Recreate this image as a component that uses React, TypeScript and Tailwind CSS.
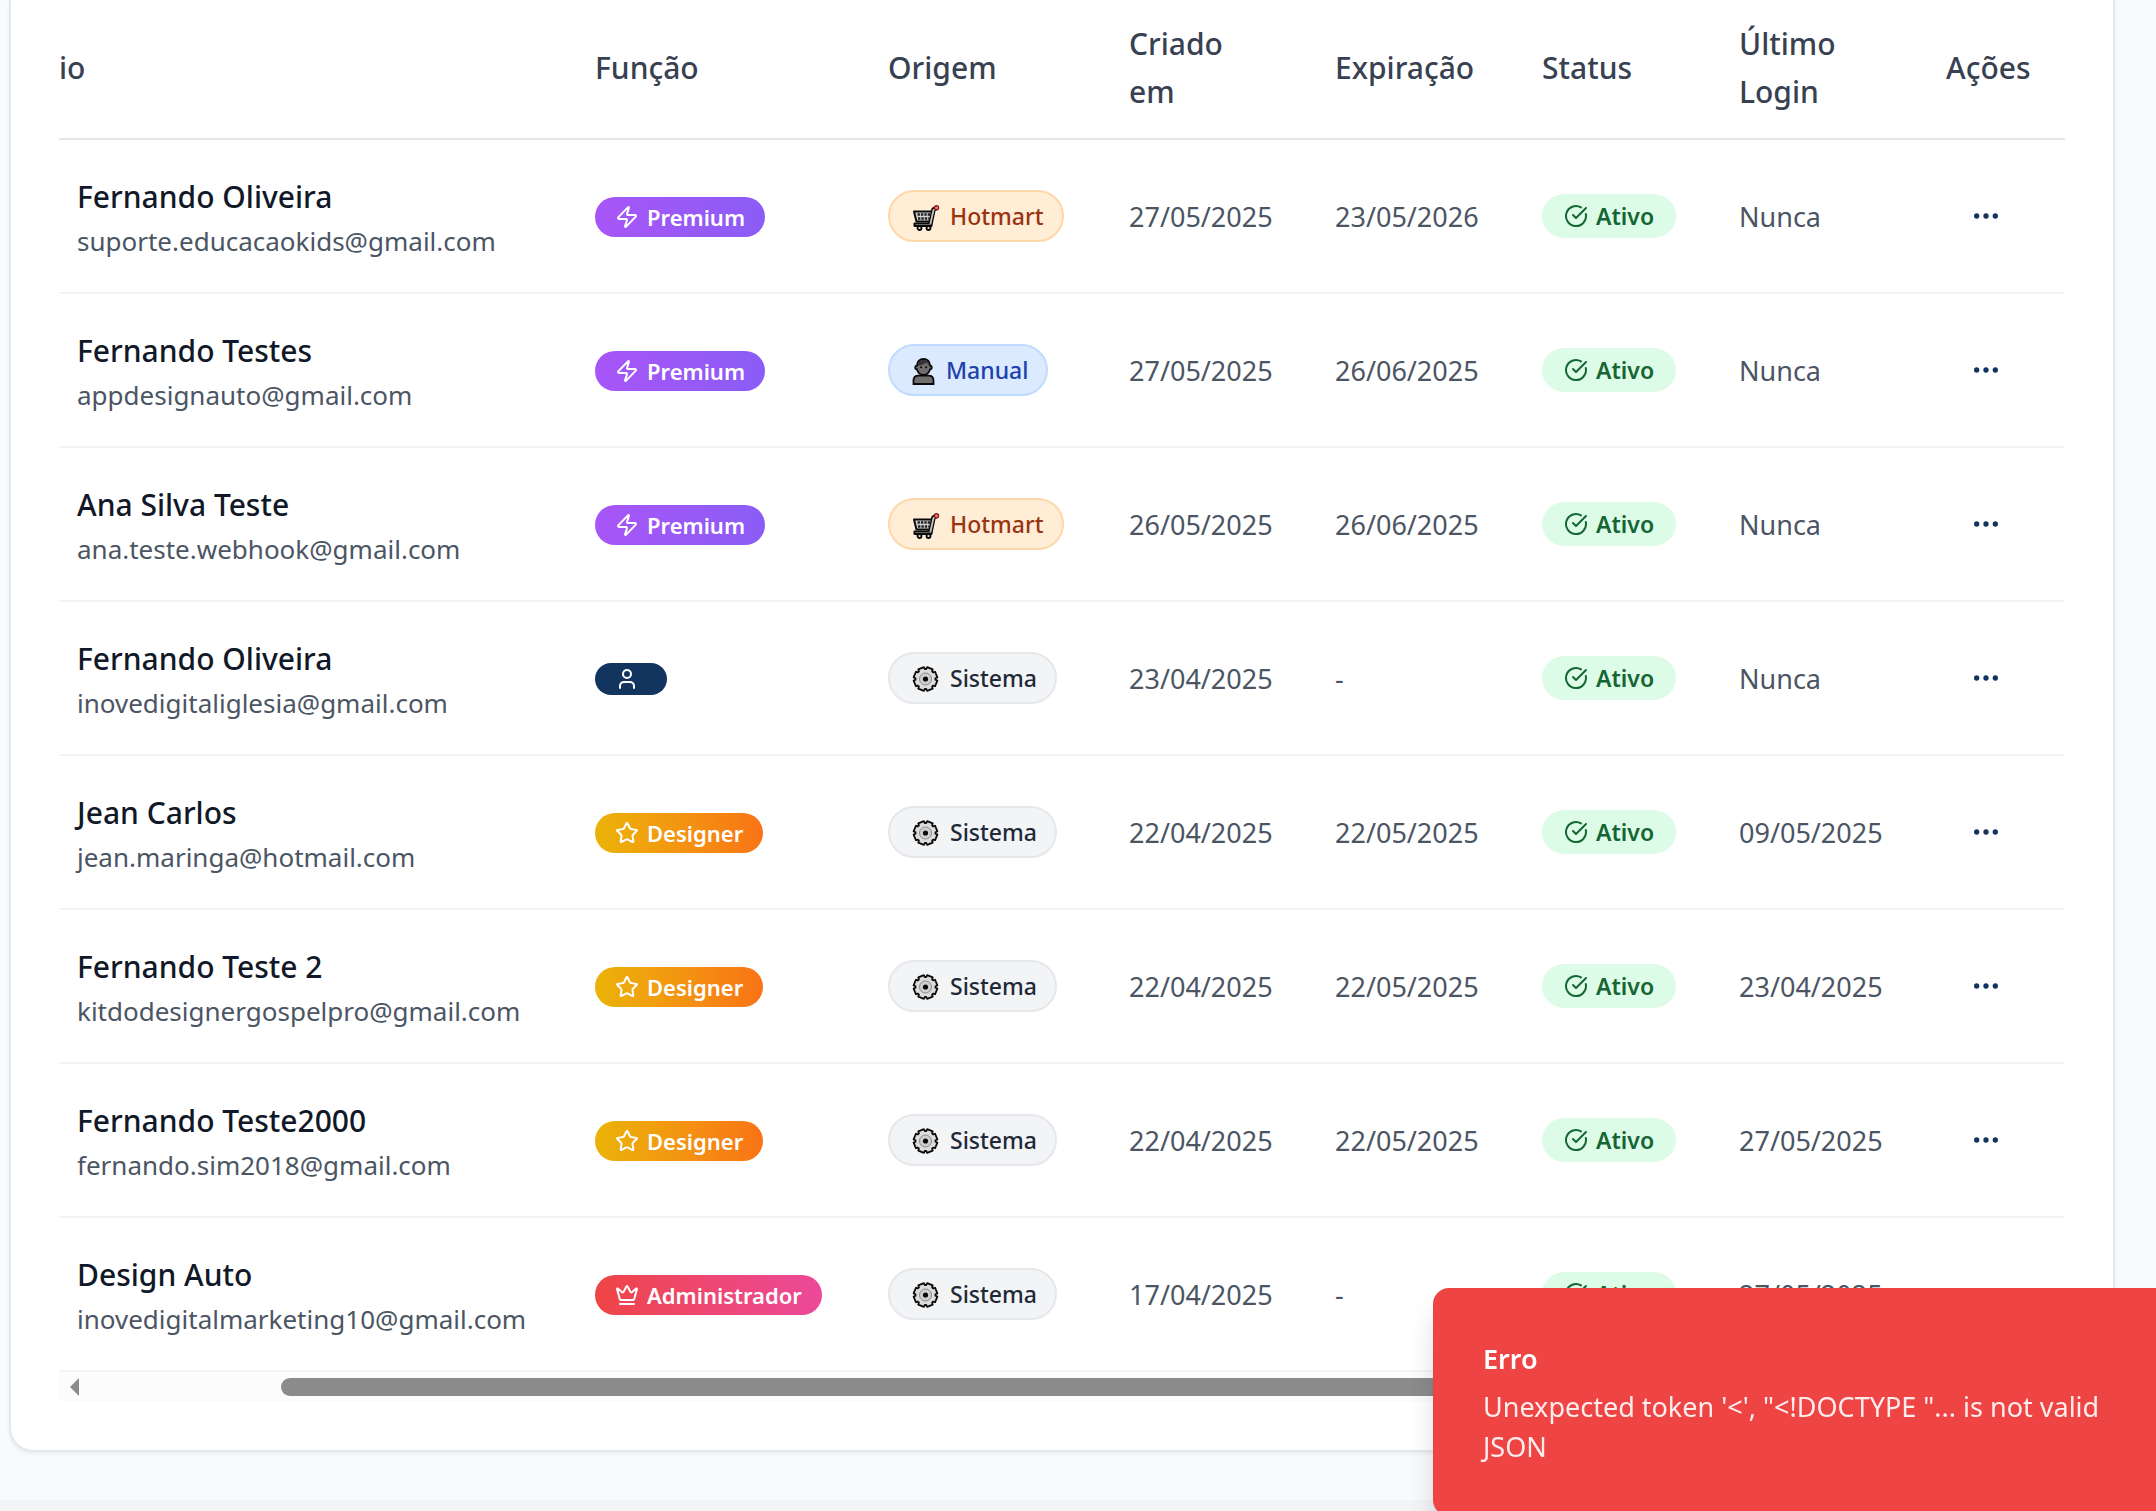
import { CircleCheckBig, Crown, Ellipsis, Star, User, Zap } from "lucide-react";

type Role = "premium" | "designer" | "admin" | "none";
type Origin = "hotmart" | "manual" | "sistema";

type Row = {
  name: string;
  email: string;
  role: Role;
  origin: Origin;
  created: string;
  expires: string;
  login: string;
};

const rows: Row[] = [
  { name: "Fernando Oliveira", email: "suporte.educacaokids@gmail.com", role: "premium", origin: "hotmart", created: "27/05/2025", expires: "23/05/2026", login: "Nunca" },
  { name: "Fernando Testes", email: "appdesignauto@gmail.com", role: "premium", origin: "manual", created: "27/05/2025", expires: "26/06/2025", login: "Nunca" },
  { name: "Ana Silva Teste", email: "ana.teste.webhook@gmail.com", role: "premium", origin: "hotmart", created: "26/05/2025", expires: "26/06/2025", login: "Nunca" },
  { name: "Fernando Oliveira", email: "inovedigitaliglesia@gmail.com", role: "none", origin: "sistema", created: "23/04/2025", expires: "-", login: "Nunca" },
  { name: "Jean Carlos", email: "jean.maringa@hotmail.com", role: "designer", origin: "sistema", created: "22/04/2025", expires: "22/05/2025", login: "09/05/2025" },
  { name: "Fernando Teste 2", email: "kitdodesignergospelpro@gmail.com", role: "designer", origin: "sistema", created: "22/04/2025", expires: "22/05/2025", login: "23/04/2025" },
  { name: "Fernando Teste2000", email: "fernando.sim2018@gmail.com", role: "designer", origin: "sistema", created: "22/04/2025", expires: "22/05/2025", login: "27/05/2025" },
  { name: "Design Auto", email: "inovedigitalmarketing10@gmail.com", role: "admin", origin: "sistema", created: "17/04/2025", expires: "-", login: "27/05/2025" },
];

const roles = {
  premium: { label: "Premium", Icon: Zap, style: "bg-linear-to-r from-[#a855f7] to-[#8b5cf6]" },
  designer: { label: "Designer", Icon: Star, style: "bg-linear-to-r from-[#eab308] to-[#f97316]" },
  admin: { label: "Administrador", Icon: Crown, style: "bg-linear-to-r from-[#ef4444] to-[#ec4899]" },
  none: { label: "", Icon: User, style: "bg-[#12355f]" },
};

function RoleBadge({ role }: { role: Role }) {
  const { label, Icon, style } = roles[role];
  return (
    <span className={`flex w-fit items-center gap-2 rounded-full px-5 py-1 text-[22px] leading-8 font-semibold text-white ${style}`}>
      <Icon className="size-6" />
      <span>{label}</span>
    </span>
  );
}

function CartIcon() {
  return (
    <svg viewBox="0 0 30 30" className="size-[30px]" aria-hidden="true" strokeLinecap="round" strokeLinejoin="round">
      <path d="M4 10.500H22.500L20.500 20.500H6.500Z" fill="#d4d4d4" />
      <path d="M26.500 7 23.500 8.500 20.500 22.500" fill="none" stroke="#0a0a0a" strokeWidth="4.500" />
      <path d="M4.500 22.500H21.500V25H4.500Z" fill="#c4c4c4" stroke="#0a0a0a" strokeWidth="2" />
      <path d="M22.500 10.500H4L6.500 20.500H20.500" fill="none" stroke="#0a0a0a" strokeWidth="2" />
      <path d="M25.500 8 23.500 9 20.500 22.500" fill="none" stroke="#c4c4c4" strokeWidth="1.800" />
      <circle cx="26.500" cy="6.800" r="2.100" fill="#f87171" stroke="#7f1d1d" strokeWidth="1.200" />
      <path d="M7.500 13.500H20M8 17.500H19.500" fill="none" stroke="#1f1f1f" strokeWidth="2.600" strokeLinecap="butt" strokeDasharray="2.400 1" />
      <circle cx="9.500" cy="27" r="2" fill="#e5e5e5" stroke="#0a0a0a" strokeWidth="1.800" />
      <circle cx="18.500" cy="27" r="2" fill="#e5e5e5" stroke="#0a0a0a" strokeWidth="1.800" />
    </svg>
  );
}

function PersonIcon() {
  return (
    <svg viewBox="0 0 26 30" className="h-[30px] w-[26px]" aria-hidden="true">
      <path d="M3.500 29V25.500C3.500 22.500 5.500 20.700 8.500 20.700H18.500C21.500 20.700 23.500 22.500 23.500 25.500V29Z" fill="#6f6f6f" stroke="#0a0a0a" strokeWidth="1.800" />
      <path d="M7 10.500C7 6.500 9.800 4 13.500 4S20 6.500 20 10.500C22.500 11 22.500 14 20 14.500C19 18 16.500 20 13.500 20S8 18 7 14.500C4.500 14 4.500 11 7 10.500Z" fill="#6f6f6f" stroke="#0a0a0a" strokeWidth="1.800" />
      <path d="M7.800 10.500C8 7 10 4.900 13.500 4.900S19 7 19.200 10.500L16.500 7.500C14.500 9.500 10.500 10.500 7.800 10.500Z" fill="#333333" />
      <circle cx="11" cy="12.300" r="1" fill="#0a0a0a" />
      <circle cx="16.200" cy="12.300" r="1" fill="#0a0a0a" />
    </svg>
  );
}

/** Outline of an eight-tooth gear, with its gaps on the axes and diagonals. */
const gearPoints = Array.from({ length: 8 }, (_, i) =>
  [
    [4, 10],
    [8, 12],
    [37, 12],
    [41, 10],
  ].map(([deg, r]) => {
    const a = ((deg + i * 45) * Math.PI) / 180;
    return `${(15.5 + r * Math.cos(a)).toFixed(2)},${(16 + r * Math.sin(a)).toFixed(2)}`;
  }),
)
  .flat()
  .join(" ");

function GearIcon() {
  return (
    <svg viewBox="0 0 30 30" className="size-[30px]" aria-hidden="true">
      <polygon points={gearPoints} fill="#dcdcdc" stroke="#0a0a0a" strokeWidth="1.800" strokeLinejoin="round" />
      <circle cx="15.500" cy="16" r="6" fill="#cfcfcf" stroke="#8a8a8a" strokeWidth="1" />
      <circle cx="15.500" cy="16" r="2.600" fill="#0a0a0a" />
    </svg>
  );
}

const origins = {
  hotmart: { label: "Hotmart", Icon: CartIcon, style: "border-[#fed7aa] bg-[#ffedd5] text-[#9a3412]" },
  manual: { label: "Manual", Icon: PersonIcon, style: "border-[#bfdbfe] bg-[#dbeafe] text-[#1e40af]" },
  sistema: { label: "Sistema", Icon: GearIcon, style: "border-[#e5e7eb] bg-[#f3f4f6] text-[#1f2937]" },
};

function OriginBadge({ origin }: { origin: Origin }) {
  const { label, Icon, style } = origins[origin];
  return (
    <span className={`flex w-fit items-center gap-2.5 rounded-full border-2 py-2 pr-[18px] pl-5 text-[23px] leading-8 font-medium ${style}`}>
      <Icon />
      <span>{label}</span>
    </span>
  );
}

export default function App() {
  return (
    <div className="flex min-h-screen flex-col overflow-hidden bg-[#f3f4f6] font-['Noto_Sans','Open_Sans',sans-serif]">
      <main className="bg-[#f8fafc] pr-[41px] pb-12 pl-[9px]">
        <section className="rounded-b-3xl border-2 border-t-0 border-[#e2e8f0] bg-white px-12 pb-12 shadow-[0_2px_4px_rgba(0,0,0,0.06)]">
          <table className="w-full table-fixed border-separate border-spacing-0 text-left text-[27px] text-[#4b5563]">
            <colgroup>
              <col />
              <col className="w-[293px]" />
              <col className="w-[241px]" />
              <col className="w-[206px]" />
              <col className="w-[207px]" />
              <col className="w-[197px]" />
              <col className="w-[207px]" />
              <col className="w-[119px]" />
            </colgroup>
            <thead>
              <tr className="h-[140px] text-[30px] leading-12 text-[#374151] *:border-b-2 *:border-[#e5e7eb] *:pb-0.5 *:font-medium">
                <th scope="col">io</th>
                <th scope="col">Função</th>
                <th scope="col">Origem</th>
                <th scope="col" className="pr-16">Criado em</th>
                <th scope="col">Expiração</th>
                <th scope="col">Status</th>
                <th scope="col" className="pr-16">Último Login</th>
                <th scope="col">Ações</th>
              </tr>
            </thead>
            <tbody>
              {rows.map((r) => (
                <tr key={r.email} className="h-[154px] *:border-b-2 *:border-[#f3f4f6]">
                  <td className="pt-0.5 pl-[18px]">
                    <div className="text-[30px] leading-12 font-medium text-[#111827]">{r.name}</div>
                    <div className="text-[26px] leading-10">{r.email}</div>
                  </td>
                  <td className="pt-0.5"><RoleBadge role={r.role} /></td>
                  <td><OriginBadge origin={r.origin} /></td>
                  <td className="pt-0.5">{r.created}</td>
                  <td className="pt-0.5">{r.expires}</td>
                  <td>
                    <span className="flex w-fit items-center gap-2 rounded-full bg-[#dcfce7] px-[22px] py-1.5 text-[23px] leading-8 font-semibold text-[#166534]">
                      <CircleCheckBig className="size-6" />
                      Ativo
                    </span>
                  </td>
                  <td className="pt-0.5">{r.login}</td>
                  <td>
                    <button type="button" aria-label="Abrir ações" className="flex h-20 w-20 items-center justify-center text-[#12355f]">
                      <Ellipsis className="size-8" />
                    </button>
                  </td>
                </tr>
              ))}
            </tbody>
          </table>
          <div className="flex h-[30px] items-center bg-[#fcfcfc] px-[11px]">
            <svg viewBox="0 0 9 18" className="h-[18px] w-[9px]" aria-hidden="true">
              <path d="M9 0v18L0 9Z" fill="#8b8b8b" />
            </svg>
            <div className="mr-5 ml-[202px] h-[18px] flex-1 rounded-full bg-[#8b8b8b]" />
          </div>
        </section>
      </main>
      <div role="alert" className="fixed right-0 -bottom-[5px] w-[723px] rounded-l-2xl bg-[#ef4444] px-[50px] pt-[51px] pb-[49px] text-[27px] leading-10 text-white shadow-[0_20px_30px_-6px_rgba(0,0,0,0.2),0_8px_12px_-8px_rgba(0,0,0,0.2)]">
        <div className="mb-2 font-semibold">Erro</div>
        <div className="opacity-90">Unexpected token '&lt;', "&lt;!DOCTYPE "... is not valid JSON</div>
      </div>
    </div>
  );
}
